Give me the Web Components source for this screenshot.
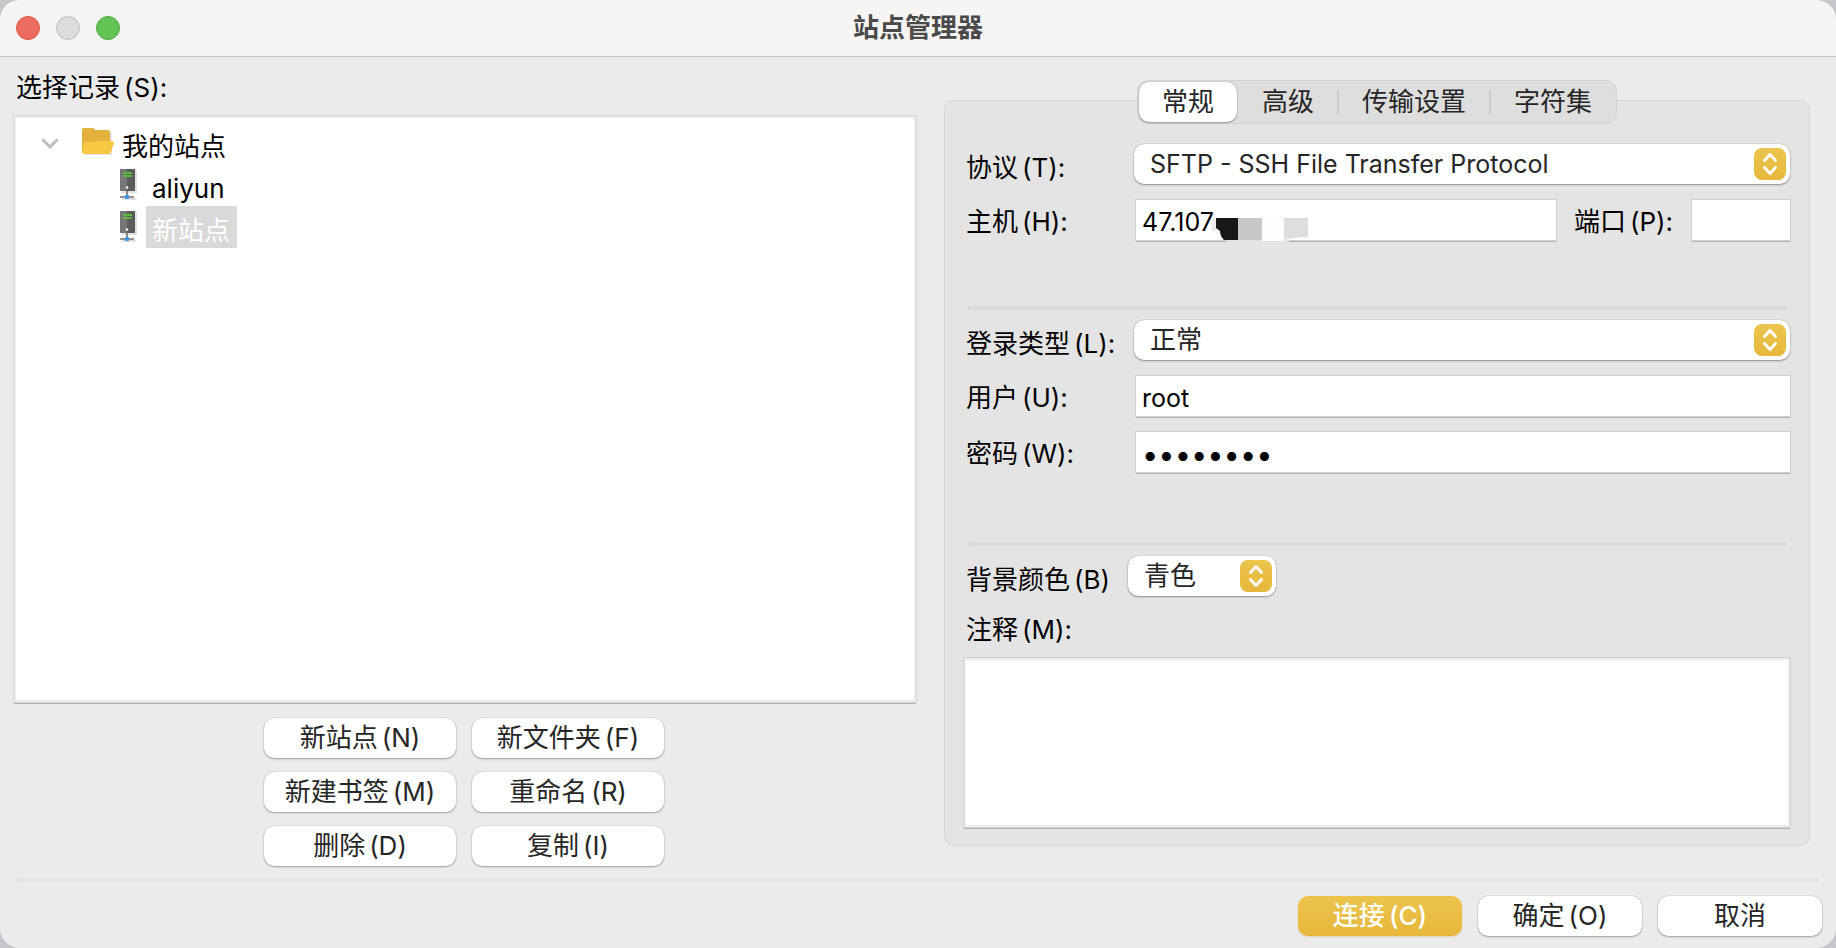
<!DOCTYPE html>
<html lang="zh-CN">
<head>
<meta charset="utf-8">
<title>站点管理器</title>
<style>
html,body{margin:0;height:100%}
body{background:#c4c6c9;font:26px/40px Inter,"Noto Sans CJK SC",sans-serif;color:#000}
</style>
</head>
<body>
<site-manager></site-manager>
<script>
const define = (name, css, html, ready) => customElements.define(name, class extends HTMLElement {
  constructor() {
    super();
    const root = this.attachShadow({mode: 'open'});
    root.innerHTML = `<style>*{box-sizing:border-box}:host{display:block}${css}</style>` +
      (typeof html === 'function' ? html(this) : html);
    if (ready) ready(root, this);
  }
});

const key = k => `<span class="key">(${k})</span>`;
const keyCss = '.key{margin-left:4px}';

define('push-button', `
button{display:block;width:100%;height:40px;border:0;border-radius:10px;padding:0;background:#fff;color:#262626;font:inherit;line-height:40px;
 box-shadow:0 0 1px rgba(0,0,0,.35),0 1px 2px rgba(0,0,0,.3)}
:host([primary]) button{background:linear-gradient(#ecc44c,#e6b73c);color:#fff;font-weight:500;box-shadow:0 1px 2px rgba(200,150,30,.3)}
${keyCss}`,
  el => `<button type="button"><slot></slot>${el.getAttribute('key') ? key(el.getAttribute('key')) : ''}</button>`);

define('h-rule', `:host{height:4px;background:#dcdcdc;border:solid #d2d2d2;border-width:0 1px}:host([light]){background:#e4e4e4;border-color:#d8d8d8}`, '');

define('title-bar', `
:host{display:grid;grid-template-columns:1fr auto 1fr;align-items:center;height:57px;padding:0 16px;background:#f6f5f3;border-bottom:1px solid #c8c8c8}
.lights{display:flex;gap:16px}
.lights button{width:24px;height:24px;padding:0;border-radius:50%;border:1px solid #d9574d;background:#ed6a5f}
.lights .min{background:#dddcda;border-color:#bdbcba}
.lights .max{background:#61c454;border-color:#51a844}
h1{margin:0;font-size:26px;line-height:40px;font-weight:700;color:#4a4a4a}`,
`<div class="lights"><button type="button" aria-label="关闭"></button><button type="button" class="min" aria-label="最小化"></button><button type="button" class="max" aria-label="缩放"></button></div>
<h1><slot></slot></h1>`);

const server = `<svg width="20" height="34" viewBox="0 0 20 34" aria-hidden="true">
<rect x="3" y="2" width="15" height="23" fill="#000" opacity=".12"/><path d="M1 1h8v22H1z" fill="#777"/><path d="M8 1h8v22H8z" fill="#5c5c5c"/>
<path d="M4 5h9M4 8h9" stroke="#5cb83c" stroke-width="2"/><circle cx="8" cy="19.500" r="1.200" fill="#fff"/>
<path d="M8 22v6" stroke="#666" stroke-width="1.500"/><path d="M3 31h14" stroke="#000" opacity=".12" stroke-width="2"/><path d="M1 29h14" stroke="#707070" stroke-width="1.500"/><rect x="6" y="27" width="4" height="4" rx="1" fill="#3c96f0"/></svg>`;

define('site-tree', `
:host{background:#fff;border:2px solid #ececec;outline:1px solid #d6d6d6;box-shadow:0 2px 0 #b0b0b0;padding:4px 0}
ul{list-style:none;margin:0;padding:0}
.row{display:flex;height:42px;align-items:flex-start}
.row span{height:42px;line-height:50px}
.root{padding-left:26px}.root span{padding-left:6px}
.toggle{width:16px;height:42px;margin-right:24px;padding:0;border:0;background:none}
.toggle svg,.row svg{display:block}
.leaf{padding-left:103px}
.leaf svg{margin:4px 7px 0 0}
.leaf span{padding:0 7px 0 6px}
.selected span{background:#d9d9d9;color:#fff}`,
`<ul role="tree"><li role="treeitem" aria-expanded="true"><div class="row root">
<button type="button" class="toggle" aria-label="折叠"><svg width="16" height="42"><path d="M1 18l7 7 7-7" fill="none" stroke="#bdbdbd" stroke-width="3" stroke-linecap="round" stroke-linejoin="round"/></svg></button>
<svg width="34" height="42" viewBox="0 0 34 42" aria-hidden="true"><path d="M2 9q0-2 2-2h9l3 2h12q2 0 2 2v22H2z" fill="#000" opacity=".1"/><path d="M0 8q0-2 2-2h9q1 0 2 2h13q2 0 2 2v20H0z" fill="#e2b23c"/><path d="M4 20h10l2-1h14q2 0 2 2l-3 9q-1 2-2 2H2q-2 0-2-2l2-9q1-1 2-1z" fill="#f8c845"/></svg>
<span>我的站点</span></div>
<ul role="group"><li role="treeitem" class="row leaf">${server}<span>aliyun</span></li><li role="treeitem" aria-selected="true" class="row leaf selected">${server}<span>新站点</span></li></ul></li></ul>`);

define('tab-strip', `
:host{display:flex;height:44px;padding:1px;border:1px solid #d4d4d4;border-radius:11px;background:#dedede}
button{border:0;background:none;padding:0 23px;font:inherit;line-height:40px;color:#262626;border-radius:10px;height:40px}
[aria-selected=true]{background:#fff;box-shadow:0 0 1px rgba(0,0,0,.4),0 1px 2px rgba(0,0,0,.3)}
i{width:2px;height:24px;margin-top:8px;background:#c8c8c8}i.off{background:none}`,
`<button type="button" role="tab" aria-selected="true">常规</button><i class="off"></i><button type="button" role="tab">高级</button><i></i><button type="button" role="tab">传输设置</button><i></i><button type="button" role="tab">字符集</button>`);

/* A labelled control: type is "select", "text", "password" or "area". */
define('form-field', `
:host{display:flex;min-width:0}
label{flex:none;width:var(--label,170px);line-height:44px;height:40px;white-space:nowrap}
.box{position:relative;flex:1;min-width:0;display:flex}
input,textarea{display:block;width:100%;height:40px;border:0;border-radius:0;padding:4px 6px 0;background:#fff;color:#000;font:inherit;font-size:25px;line-height:36px;outline:0;
 box-shadow:0 0 0 1px #d0d0d0,0 2px 0 #b0b0b0}
input[type=password]{font-size:29px}
:host([type=select]) label{line-height:48px}
:host([type=select]) .box{margin-left:-2px}
select{appearance:none;width:100%;height:40px;border:0;border-radius:10px;padding:0 44px 0 16px;background:#fff;color:#262626;font:inherit;font-size:var(--size,26px);line-height:40px;
 box-shadow:0 0 1px rgba(0,0,0,.4),0 1px 2px rgba(0,0,0,.35)}
.step{position:absolute;right:4px;top:4px;pointer-events:none}
:host([type=area]){flex-direction:column}
:host([type=area]) label{height:50px}
:host([type=area]) .box{margin-left:-2px}
textarea{flex:1;height:auto;resize:none;border:2px solid #ececec}
::slotted(*){position:absolute;left:75px;top:17px}
${keyCss}`,
el => {
  const a = n => el.getAttribute(n) || '', type = a('type');
  const control = type === 'select'
    ? `<select id="c"><option>${a('value')}</option></select><svg class="step" width="32" height="32" viewBox="0 0 32 32" aria-hidden="true"><defs><linearGradient id="g" x2="0" y2="1"><stop stop-color="#ecc44c"/><stop offset="1" stop-color="#e6b73c"/></linearGradient></defs><rect width="32" height="32" rx="8" fill="url(#g)"/><path d="M10.500 12.500l5.500-6 5.500 6M10.500 19.500l5.500 6 5.500-6" fill="none" stroke="#fff" stroke-width="3" stroke-linecap="round" stroke-linejoin="round"/></svg>`
    : type === 'area' ? '<textarea id="c"></textarea>'
    : `<input id="c" type="${type}" value="${a('value')}">`;
  return `<label for="c">${a('label')}${key(a('key'))}${el.hasAttribute('bare') ? '' : ':'}</label><div class="box">${control}<slot></slot></div>`;
});

define('pixel-mask', ``, `<svg width="98" height="25" viewBox="0 0 98 25" style="display:block" aria-hidden="true">
<path d="M14 23h64v2H16z" fill="#e4e4e4"/><path d="M1 1h4v13l-5 0z" fill="#ececec"/>
<path d="M5 1h22v22H13q-4-4-4-9l-4-3z" fill="#171717"/><path d="M27 1h24v22H27z" fill="#c8c8c8"/><path d="M51 1h22v23H51z" fill="#fdfdfd"/><path d="M73 1h24v19l-14 1-10 2z" fill="#dedede"/></svg>`);

define('site-settings', `
:host{display:flex;flex-direction:column;min-width:0}
tab-strip{align-self:center;z-index:1}
.panel{flex:1;display:flex;flex-direction:column;margin-top:-24px;padding:43px 19px 18px 21px;border:1px solid #d6d6d6;border-radius:10px;background:#e4e4e4}
.group{display:flex;flex-direction:column;gap:16px;padding-bottom:66px}
.group.login{padding-bottom:70px}
.pair{display:flex;gap:18px}
.pair :first-child{flex:1}
.port{--label:118px;width:216px}
h-rule{margin:0 4px 10px 2px}
.color{--label:164px;width:310px}
.notes{flex:1;margin-top:12px}
`, `
<tab-strip role="tablist"></tab-strip>
<div class="panel">
<div class="group">
<form-field type="select" label="协议" key="T" value="SFTP - SSH File Transfer Protocol" style="--size:25px"></form-field>
<div class="pair"><form-field type="text" label="主机" key="H" value="47.107"><pixel-mask></pixel-mask></form-field><form-field class="port" type="text" label="端口" key="P"></form-field></div>
</div>
<h-rule></h-rule>
<div class="group login">
<form-field type="select" label="登录类型" key="L" value="正常"></form-field>
<form-field type="text" label="用户" key="U" value="root"></form-field>
<form-field type="password" label="密码" key="W" value="password"></form-field>
</div>
<h-rule></h-rule>
<form-field class="color" type="select" label="背景颜色" key="B" bare value="青色"></form-field>
<form-field class="notes" type="area" label="注释" key="M"></form-field>
</div>`);

define('site-manager', `
:host{display:flex;flex-direction:column;min-height:100vh;border-radius:20px;overflow:hidden;background:#ebebeb}
main{flex:1;display:grid;grid-template-columns:902fr 866fr;column-gap:28px;padding:0 26px 0 14px}
.sites{display:flex;flex-direction:column;padding-top:10px}
.caption{height:49px;line-height:42px;padding-left:2px}
site-tree{flex:1}
.actions{display:grid;grid-template-columns:192px 192px;gap:14px 16px;justify-content:center;padding:16px 2px 0 0}
site-settings{margin:23px 0 20px}
h-rule{margin:12px 18px 0 17px}
footer{display:flex;justify-content:flex-end;gap:16px;padding:14px 14px 12px}
footer push-button{width:164px}
${keyCss}`, `
<title-bar>站点管理器</title-bar>
<main>
<section class="sites"><div class="caption">选择记录${key('S')}:</div>
<site-tree></site-tree>
<div class="actions"><push-button key="N">新站点</push-button><push-button key="F">新文件夹</push-button><push-button key="M">新建书签</push-button><push-button key="R">重命名</push-button><push-button key="D">删除</push-button><push-button key="I">复制</push-button></div></section>
<site-settings></site-settings>
</main>
<h-rule light></h-rule>
<footer><push-button primary key="C">连接</push-button><push-button key="O">确定</push-button><push-button>取消</push-button></footer>`);
</script>
</body>
</html>
